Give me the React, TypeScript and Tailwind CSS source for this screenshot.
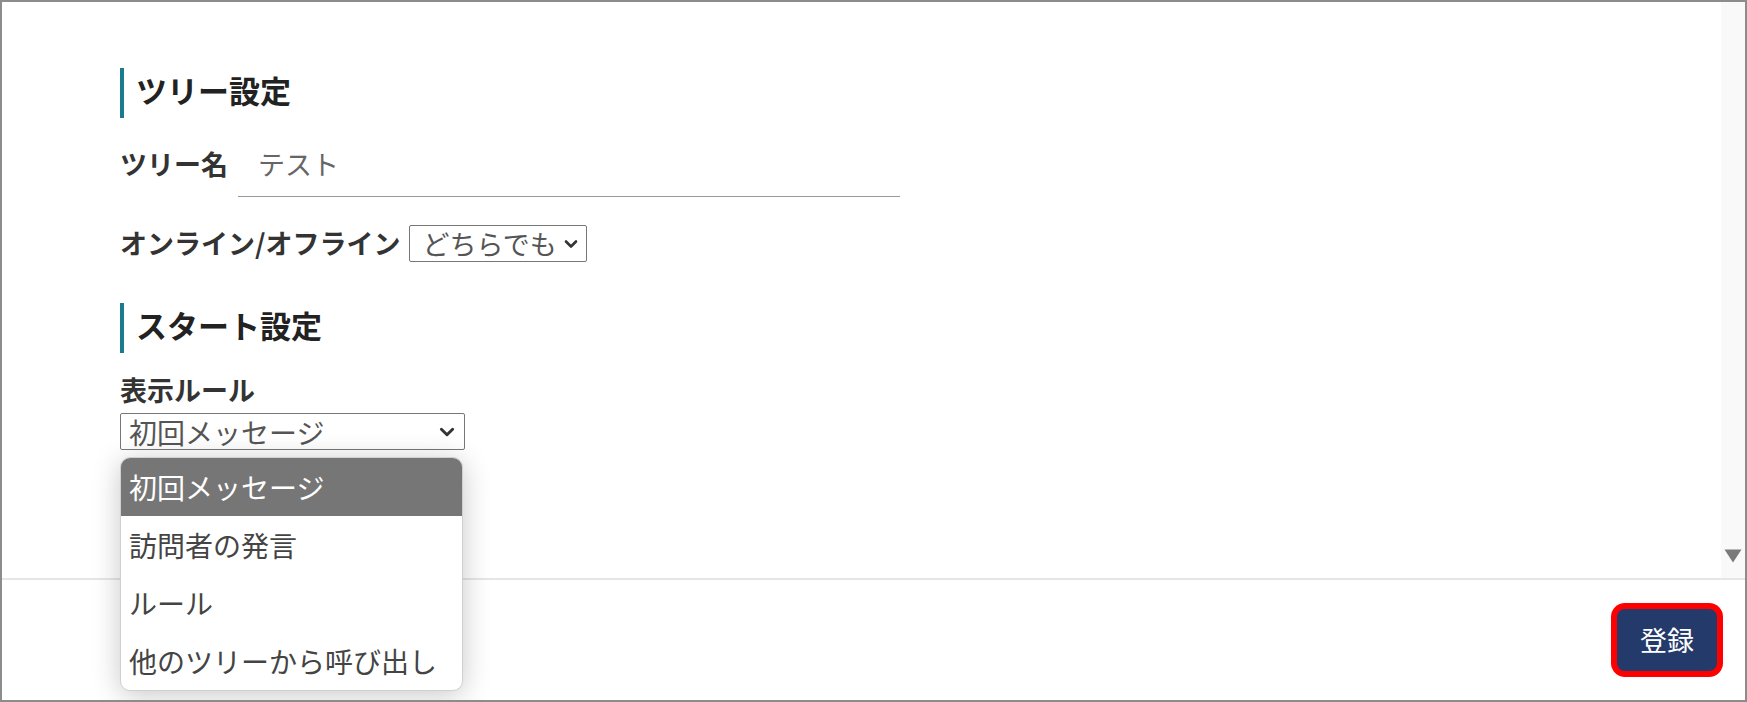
import React from "react";

const ruleOptions = ["初回メッセージ", "訪問者の発言", "ルール", "他のツリーから呼び出し"];

function Chevron({ className }: { className?: string }) {
  return (
    <svg viewBox="0 0 16 16" className={className} fill="none" stroke="#333" strokeWidth={2.6} strokeLinecap="round" strokeLinejoin="round">
      <path d="M3 5.5l5 5 5-5" />
    </svg>
  );
}

function SectionTitle({ children }: { children: React.ReactNode }) {
  return (
    <h2 className="flex h-[50px] items-center border-l-4 border-[#1b7a8e] pb-[5px] pl-[12px] text-[31px] font-bold text-[#222]">
      {children}
    </h2>
  );
}

export default function App() {
  return (
    <div className="flex h-[702px] w-[1747px] flex-col overflow-hidden border-2 border-[#8c8c8c] bg-white font-['Noto_Sans_CJK_JP','Noto_Sans',sans-serif]">
      {/* scroll area */}
      <div className="flex h-[576px]">
        <div className="flex-1 pl-[118px] pt-[66px]">
          <SectionTitle>ツリー設定</SectionTitle>

          <div className="mt-[26px] flex items-start">
            <label className="h-[40px] text-[27px] font-bold leading-[40px] text-[#333]">ツリー名</label>
            <div className="ml-[10px] w-[662px] border-b border-[#9a9a9a] pb-[12px]">
              <input
                type="text"
                defaultValue="テスト"
                className="h-[40px] w-full pl-[20px] text-[27px] text-[#666] outline-none"
              />
            </div>
          </div>

          <div className="mt-[28px] flex h-[37px] items-center">
            <span className="text-[27px] font-bold text-[#333]">オンライン/オフライン</span>
            <div className="ml-[9px] flex h-[37px] w-[178px] items-center rounded-[2px] border border-[#777] pl-[12px] pr-[7px]">
              <span className="flex-1 text-[27px] leading-none text-[#555]">どちらでも</span>
              <Chevron className="h-[16px] w-[16px]" />
            </div>
          </div>

          <div className="mt-[41px]">
            <SectionTitle>スタート設定</SectionTitle>
          </div>

          <div className="mt-[22px] text-[27px] font-bold leading-[30px] text-[#333]">表示ルール</div>

          <div className="relative mt-[8px] w-[345px]">
            <div className="flex h-[37px] items-center rounded-[2px] border border-[#777] pl-[8px] pr-[8px]">
              <span className="flex-1 text-[28px] leading-none text-[#555]">初回メッセージ</span>
              <Chevron className="h-[18px] w-[18px]" />
            </div>

            {/* open list */}
            <ul className="absolute left-0 top-[44px] z-10 w-[343px] overflow-hidden rounded-[10px] border border-[#d0d0d0] bg-white shadow-[0_4px_28px_rgba(0,0,0,0.22)]">
              {ruleOptions.map((opt, i) => (
                <li
                  key={opt}
                  className={`flex h-[58px] items-center px-[8px] text-[28px] ${
                    i === 0 ? "bg-[#767676] text-white" : "text-[#444]"
                  }`}
                >
                  {opt}
                </li>
              ))}
            </ul>
          </div>
        </div>

        {/* scrollbar strip */}
        <div className="flex w-[24px] flex-col items-center justify-end bg-[#f9f9f9] pb-[15px]">
          <svg viewBox="0 0 18 14" className="h-[14px] w-[18px]">
            <path d="M0.5 0.5h17L9 13.5z" fill="#7a7a7a" />
          </svg>
        </div>
      </div>

      {/* footer */}
      <div className="flex flex-1 items-center justify-end border-t-2 border-[#e6e6e6] pr-[28px]">
        <button className="flex h-[62px] w-[100px] items-center justify-center rounded-[8px] bg-[#243a6b] text-[27px] text-white shadow-[0_0_0_6px_#ff0000]">
          登録
        </button>
      </div>
    </div>
  );
}
